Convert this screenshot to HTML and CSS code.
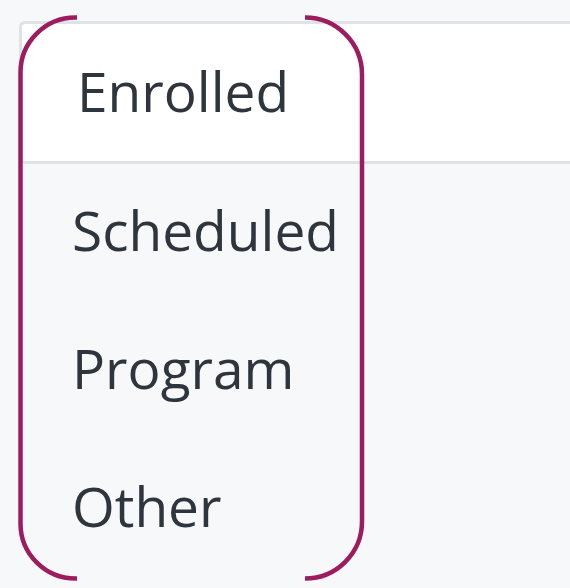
FILE: index.html
```html
<!DOCTYPE html>
<html lang="en">
<head>
    <meta charset="UTF-8">
    <meta name="viewport" content="width=device-width, initial-scale=1.0">
    <title>Tabs</title>
    <link rel="stylesheet" href="styles.css">
</head>
<body>

<div class="page">
    <ul class="nav-tabs">
        <li class="tab active">Enrolled</li>
        <li class="tab">Scheduled</li>
        <li class="tab">Program</li>
        <li class="tab">Other</li>
    </ul>

    <svg class="highlight" width="570" height="588" viewBox="0 0 570 588">
        <path d="M77 17.5 H75.5 A55 55 0 0 0 20.5 72.5 V523.5 A55 55 0 0 0 75.5 578.5 H77" />
        <path d="M305 17.5 A57 57 0 0 1 362 74.5 V521.5 A57 57 0 0 1 305 578.5" />
    </svg>
</div>

</body>
</html>
```

FILE: styles.css
```css
body {
    font-family: "Open Sans", Arial, sans-serif;
    background-color: #f7f8fa;
    margin: 0;
    padding: 0;
}

.page {
    position: relative;
    width: 570px;
    height: 588px;
    overflow: hidden;
}

.nav-tabs {
    list-style: none;
    margin: 0;
    padding: 21px 0 0 0;
}

.tab {
    height: 138px;
    line-height: 132px;
    padding-left: 72px;
    font-size: 55px;
    color: #2f353c;
    box-sizing: border-box;
}

.tab.active {
    height: 143px;
    line-height: 133px;
    margin-left: 19px;
    padding-left: 55px;
    background-color: #fff;
    border: 3px solid #dfe2e6;
    border-right: none;
    border-radius: 6px 0 0 6px;
}

.highlight {
    position: absolute;
    top: 0;
    left: 0;
}

.highlight path {
    fill: none;
    stroke: #9c1c5f;
    stroke-width: 4.5;
}
```
